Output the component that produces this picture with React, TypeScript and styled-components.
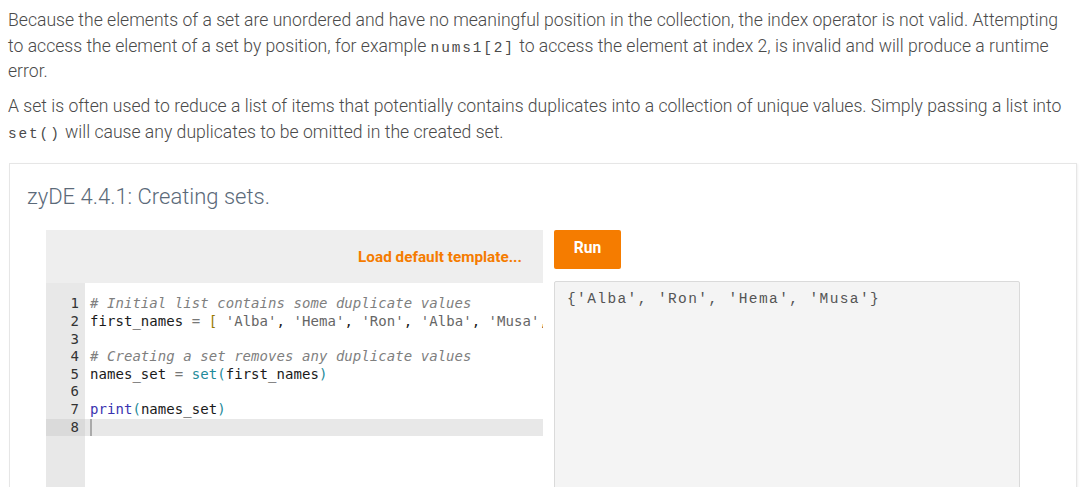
import React from "react";
import styled, { createGlobalStyle } from "styled-components";

const Global = createGlobalStyle`
  html, body { margin: 0; padding: 0; background: #ffffff; }
  body { padding: 0 8px; font-family: Roboto, "Liberation Sans", sans-serif; }
`;

const Page = styled.div`
  width: 1065px;
  padding-top: 8px;
`;

const Para = styled.p`
  margin: 0 0 9.5px 0;
  font-family: Roboto, "Liberation Sans", sans-serif;
  font-weight: 300;
  font-size: 17.6px;
  line-height: 25.6px;
  color: #4a4a4a;
`;

const InlineCode = styled.code`
  font-family: "Liberation Mono", "Courier New", monospace;
  font-size: 14.4px;
  letter-spacing: 1.9px;
  line-height: 1;
  color: #4a4a4a;
`;

const Card = styled.section`
  margin: 18px 0 0 1px;
  width: 1068px;
  border: 1px solid #e6e6e6;
  box-shadow: 1px 1px 2px rgba(0, 0, 0, 0.06);
  background: #fff;
  padding: 18px 0 0 17px;
  box-sizing: border-box;
`;

const Title = styled.h2`
  margin: 0;
  font-family: Roboto, "Liberation Sans", sans-serif;
  font-weight: 300;
  font-size: 22px;
  line-height: 30px;
  color: #5b6a79;
`;

const Body = styled.div`
  display: flex;
  gap: 11px;
  margin: 18px 0 0 19px;
  align-items: flex-start;
`;

const Editor = styled.div`
  width: 497px;
  background: #eeeeee;
  display: flex;
  flex-direction: column;
`;

const EditorHeader = styled.div`
  height: 53px;
  display: flex;
  align-items: center;
  justify-content: flex-end;
  padding-right: 21px;
`;

const LoadLink = styled.a`
  font-family: Roboto, "Liberation Sans", sans-serif;
  font-weight: 700;
  font-size: 15.3px;
  color: #f57c00;
  cursor: pointer;
`;

const CodeArea = styled.div`
  display: flex;
  height: 230px;
  background: #ffffff;
  overflow: hidden;
`;

const Gutter = styled.div`
  width: 39px;
  flex: none;
  background: #e8e8e8;
  padding-top: 12px;
  box-sizing: border-box;
`;

const LineNo = styled.div<{ $active?: boolean }>`
  height: 17.6px;
  line-height: 17.6px;
  text-align: right;
  padding-right: 6px;
  font-family: "DejaVu Sans Mono", monospace;
  font-size: 14px;
  color: #333;
  background: ${(p) => (p.$active ? "#dadada" : "transparent")};
`;

const Lines = styled.div`
  flex: 1;
  padding-top: 12px;
  min-width: 0;
`;

const Line = styled.div<{ $active?: boolean }>`
  height: 17.6px;
  line-height: 17.6px;
  padding-left: 5px;
  white-space: pre;
  overflow: hidden;
  font-family: "DejaVu Sans Mono", monospace;
  font-size: 14px;
  letter-spacing: 0.05px;
  color: #1a1a1a;
  background: ${(p) => (p.$active ? "#e8e8e8" : "transparent")};
`;

const Cursor = styled.span`
  display: inline-block;
  vertical-align: middle;
  width: 2px;
  height: 17px;
  background: #aaaaaa;
`;

const Comment = styled.span`
  color: #7f7f7f;
  font-style: italic;
`;
const Str = styled.span`
  color: #666666;
`;
const Op = styled.span`
  color: #777777;
`;
const Bracket = styled.span`
  color: #997a00;
`;
const Builtin = styled.span`
  color: #1f8b9b;
`;
const Keyword = styled.span`
  color: #3a33b0;
`;
const Paren = styled.span`
  color: #1f8b9b;
`;

const RightCol = styled.div`
  width: 466px;
  display: flex;
  flex-direction: column;
  gap: 12px;
`;

const RunButton = styled.button`
  width: 67px;
  height: 39px;
  border: none;
  border-radius: 2px;
  background: #f57c00;
  color: #fff;
  font-family: Roboto, "Liberation Sans", sans-serif;
  font-weight: 700;
  font-size: 15.6px;
  padding: 0 0 3px 0;
  cursor: pointer;
`;

const Output = styled.pre`
  margin: 0;
  height: 240px;
  background: #f4f4f4;
  border: 1px solid #dadada;
  border-radius: 2px;
  padding: 7px 12px;
  font-family: "Liberation Mono", "Courier New", monospace;
  font-size: 14.5px;
  letter-spacing: 1.4px;
  line-height: 20px;
  color: #555;
`;

export default function App() {
  return (
    <>
      <Global />
      <Page>
        <Para>
          Because the elements of a set are unordered and have no meaningful position in the collection, the index
          operator is not valid. Attempting to access the element of a set by position, for example{" "}
          <InlineCode>nums1[2]</InlineCode> to access the element at index 2, is invalid and will produce a runtime
          error.
        </Para>
        <Para>
          A set is often used to reduce a list of items that potentially contains duplicates into a collection of
          unique values. Simply passing a list into <InlineCode>set()</InlineCode> will cause any duplicates to be
          omitted in the created set.
        </Para>
        <Card>
          <Title>zyDE 4.4.1: Creating sets.</Title>
          <Body>
            <Editor>
              <EditorHeader>
                <LoadLink>Load default template...</LoadLink>
              </EditorHeader>
              <CodeArea>
                <Gutter>
                  {[1, 2, 3, 4, 5, 6, 7, 8].map((n) => (
                    <LineNo key={n} $active={n === 8}>
                      {n}
                    </LineNo>
                  ))}
                </Gutter>
                <Lines>
                  <Line>
                    <Comment># Initial list contains some duplicate values</Comment>
                  </Line>
                  <Line>
                    {"first_names "}
                    <Op>=</Op> <Bracket>[</Bracket> <Str>'Alba'</Str>, <Str>'Hema'</Str>, <Str>'Ron'</Str>,{" "}
                    <Str>'Alba'</Str>, <Str>'Musa'</Str>, <Str>'Hema'</Str> <Bracket>]</Bracket>
                  </Line>
                  <Line> </Line>
                  <Line>
                    <Comment># Creating a set removes any duplicate values</Comment>
                  </Line>
                  <Line>
                    {"names_set "}
                    <Op>=</Op> <Builtin>set</Builtin>
                    <Paren>(</Paren>first_names<Paren>)</Paren>
                  </Line>
                  <Line> </Line>
                  <Line>
                    <Keyword>print</Keyword>
                    <Paren>(</Paren>names_set<Paren>)</Paren>
                  </Line>
                  <Line $active>
                    <Cursor />
                  </Line>
                </Lines>
              </CodeArea>
            </Editor>
            <RightCol>
              <RunButton>Run</RunButton>
              <Output>{"{'Alba', 'Ron', 'Hema', 'Musa'}"}</Output>
            </RightCol>
          </Body>
        </Card>
      </Page>
    </>
  );
}
